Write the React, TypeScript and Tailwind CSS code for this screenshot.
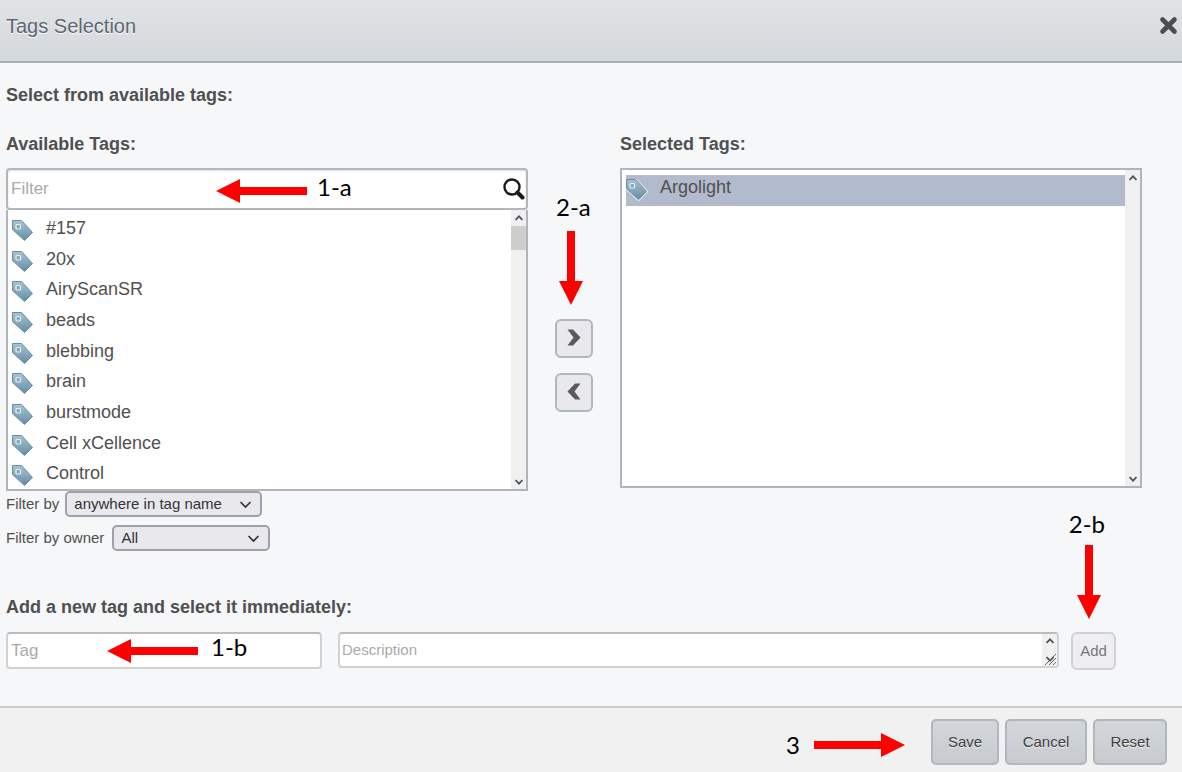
import { useState } from "react";
import clsx from "clsx";

const TAGS = ["#157", "20x", "AiryScanSR", "beads", "blebbing", "brain", "burstmode", "Cell xCellence", "Control"];

export default function App() {
  const [filter, setFilter] = useState("");
  const [tagName, setTagName] = useState("");
  const [description, setDescription] = useState("");

  const visible = TAGS.filter((t) => t.toLowerCase().includes(filter.toLowerCase()));

  return (
    <div className="flex min-h-screen flex-col bg-[#f5f7f9] font-['Liberation_Sans',Arial,sans-serif] text-[#505050]">
      <header className="flex h-[63px] items-start justify-between border-b-2 border-[#a8b0b7] bg-linear-to-b from-[#e0e4e6] to-[#d4d7db] pt-3 pl-[6px] pr-1">
        <h1 className="text-xl leading-7 text-[#5c6773] [text-shadow:0_1px_0_#fff]">Tags Selection</h1>
        <button type="button" aria-label="Close" className="pt-1">
          <CloseIcon />
        </button>
      </header>

      <main className="flex-1 pt-5 pr-10 pl-[6px]">
        <h2 className="text-lg leading-6 font-bold">Select from available tags:</h2>

        <div className="mt-[25px] flex items-start">
          <section className="min-w-0 flex-1">
            <label htmlFor="filter" className="block text-lg leading-6 font-bold">
              Available Tags:
            </label>
            <div className="relative mt-3">
              <input
                id="filter"
                value={filter}
                onChange={(e) => setFilter(e.target.value)}
                placeholder="Filter"
                className="block h-[42px] w-full rounded border-2 border-[#b2b7bc] bg-white pr-10 pl-[3px] text-[17px] shadow-[inset_0_1px_2px_#ddd] outline-none placeholder:text-[#aaa]"
              />
              <SearchIcon />
              <Note label="1-a" className="top-[5px] left-[210px] flex-row gap-[10px]">
                <Arrow className="mt-[6px] rotate-180" />
              </Note>
            </div>
            <div className="flex h-[281px] border-2 border-t-0 border-[#b0b5bd] bg-white">
              <ul className="grid h-[278px] flex-1 auto-rows-[minmax(0,1fr)] content-start pt-[2px] pl-1">
                {visible.map((tag) => (
                  <TagRow key={tag} name={tag} />
                ))}
              </ul>
              <Scrollbar thumb />
            </div>
            <div className="flex items-center gap-[6px] text-[15px]">
              <label htmlFor="mode">Filter by</label>
              <Dropdown id="mode" className="w-[197px]" options={["anywhere in tag name", "at start of tag name"]} />
            </div>
            <div className="mt-2 flex items-center gap-2 text-[15px]">
              <label htmlFor="owner">Filter by owner</label>
              <Dropdown id="owner" className="w-[158px]" options={["All", "Owned by me"]} />
            </div>
          </section>

          <div className="relative flex w-[92px] flex-col items-center gap-[15px] pt-[187px]">
            <Note label="2-a" className="top-[61px] left-7 flex-col-reverse justify-end gap-[10px]">
              <DownArrow className="ml-[3px]" />
            </Note>
            <MoveButton label="Add to selected" />
            <MoveButton label="Remove from selected" back />
          </div>

          <section className="min-w-0 flex-1">
            <h3 className="text-lg leading-6 font-bold">Selected Tags:</h3>
            <div className="mt-3 flex h-80 border-2 border-[#b0b5bd] bg-white">
              <ul className="flex-1 pt-[5px] pl-1">
                <TagRow name="Argolight" selected />
              </ul>
              <Scrollbar />
            </div>
          </section>
        </div>

        <h2 className="mt-11 text-lg leading-6 font-bold">Add a new tag and select it immediately:</h2>
        <form className="relative mt-[13px] flex items-start pr-[26px]" onSubmit={(e) => e.preventDefault()}>
          <input
            aria-label="Tag"
            value={tagName}
            onChange={(e) => setTagName(e.target.value)}
            placeholder="Tag"
            className="mr-4 h-[37px] w-[316px] rounded border-2 border-[#d0d2d4] border-t-[#bcbcbc] bg-white pl-[3px] text-[17px] outline-none placeholder:text-[#aaa]"
          />
          <div className="flex h-9 min-w-0 flex-1 overflow-hidden rounded border-2 border-[#d0d2d4] border-t-[#bcbcbc] bg-white">
            <textarea
              aria-label="Description"
              value={description}
              onChange={(e) => setDescription(e.target.value)}
              placeholder="Description"
              className="h-8 min-w-0 flex-1 resize-none overflow-hidden pt-[6px] pl-[2px] text-[15px] leading-5 outline-none placeholder:text-[#aaa]"
            />
            <div className="relative flex w-[15px] flex-col items-center justify-between bg-[#f0f0f0] py-[4px]">
              <ScrollChevron />
              <ScrollChevron down />
              <svg className="absolute right-0 bottom-0" width="13" height="13" viewBox="0 0 13 13" stroke="#666" strokeWidth="1">
                <path d="M1 12L12 1M5 12l7-7M9 12l3-3" />
              </svg>
            </div>
          </div>
          <button
            type="submit"
            className="ml-3 h-[38px] w-[45px] rounded-md border-2 border-[#cfd1d7] bg-[#efeff3] text-[15px] text-[#777]"
          >
            Add
          </button>
          <Note label="1-b" className="top-[1px] left-[101px] flex-row gap-[13px]">
            <Arrow className="mt-[6px] rotate-180" />
          </Note>
          <Note label="2-b" className="right-[37px] bottom-[51px] flex-col-reverse justify-end gap-[7px]">
            <DownArrow className="ml-2" />
          </Note>
        </form>
      </main>

      <footer className="flex h-[66px] items-start justify-end gap-[6px] border-t-2 border-[#c8ccce] bg-[#f1f1f1] pt-[11px] pr-[15px]">
        <div className="flex items-center gap-[14px] pt-3 pr-5">
          <NoteText>3</NoteText>
          <Arrow />
        </div>
        <FooterButton className="w-[68px]">Save</FooterButton>
        <FooterButton className="w-[82px]">Cancel</FooterButton>
        <FooterButton className="w-[74px]">Reset</FooterButton>
      </footer>
    </div>
  );
}

function TagRow({ name, selected }: { name: string; selected?: boolean }) {
  return (
    <li className={clsx("flex max-h-[31px] gap-3", selected ? "h-[31px] bg-[#b2bbcb]" : "")}>
      <TagIcon outlined={selected} />
      <span className={clsx("text-lg leading-6", selected ? "" : "pt-1")}>{name}</span>
    </li>
  );
}

function Dropdown({ id, options, className }: { id: string; options: string[]; className: string }) {
  return (
    <span className="relative inline-flex">
      <select
        id={id}
        className={clsx(
          "h-[26px] appearance-none rounded-[5px] border-2 border-[#9f9fad] bg-[#e9e9ed] pl-[7px] text-[15px] leading-5 text-[#333]",
          className
        )}
      >
        {options.map((o) => (
          <option key={o}>{o}</option>
        ))}
      </select>
      <svg
        className="pointer-events-none absolute top-[10px] right-[11px]"
        width="11"
        height="8"
        viewBox="0 0 11 8"
        fill="none"
        stroke="#333"
        strokeWidth="1.7"
        strokeLinecap="round"
      >
        <path d="M1 1.5l4.5 4.5L10 1.5" />
      </svg>
    </span>
  );
}

function MoveButton({ label, back }: { label: string; back?: boolean }) {
  return (
    <button
      type="button"
      aria-label={label}
      className="flex h-[39px] w-[38px] items-center justify-center rounded-md border-2 border-[#afb7bf] bg-[#e9e9ed] pb-[2px]"
    >
      <svg className={back ? "rotate-180" : ""} width="14" height="17" viewBox="0 0 14 17">
        <path d="M0.5 0.5H6L13.5 8.5L6 16.5H0.5L6.5 8.5Z" fill="#5a5a5a" />
      </svg>
    </button>
  );
}

function FooterButton({ children, className }: { children: string; className: string }) {
  return (
    <button
      type="button"
      className={clsx(
        "h-[46px] rounded-[5px] border-2 border-[#b0b8bf] bg-linear-to-b from-[#d3d6d9] to-[#c7cacf] text-[15px] text-[#3f3f3f] [text-shadow:0_1px_0_#eee]",
        className
      )}
    >
      {children}
    </button>
  );
}

function Scrollbar({ thumb }: { thumb?: boolean }) {
  return (
    <div className="flex w-[15px] flex-col items-center justify-between bg-[#f0f0f0] pt-[5px] pb-1">
      <div className="flex w-full flex-col items-center gap-[5px]">
        <ScrollChevron />
        {thumb && <div className="h-6 w-full bg-[#cdcdcd]" />}
      </div>
      <ScrollChevron down />
    </div>
  );
}

function ScrollChevron({ down }: { down?: boolean }) {
  return (
    <svg className={down ? "rotate-180" : ""} width="8" height="6" viewBox="0 0 8 6" fill="none" stroke="#505050" strokeWidth="1.7">
      <path d="M0.5 5L4 1.3L7.5 5" />
    </svg>
  );
}

// Callouts pointing at each step of the dialog
function Note({ label, className, children }: { label: string; className: string; children: React.ReactNode }) {
  return (
    <div className={clsx("pointer-events-none absolute flex items-start", className)}>
      {children}
      <NoteText>{label}</NoteText>
    </div>
  );
}

function NoteText({ children }: { children: string }) {
  return <span className="font-[Lato,'Open_Sans',sans-serif] text-2xl leading-7 text-black">{children}</span>;
}

function Arrow({ className }: { className?: string }) {
  return (
    <svg className={className} width="91" height="24" viewBox="0 0 91 24" fill="#f00">
      <path d="M0 8H67V0L91 12L67 24V16H0Z" />
    </svg>
  );
}

function DownArrow({ className }: { className?: string }) {
  return (
    <svg className={className} width="24" height="74" viewBox="0 0 24 74" fill="#f00">
      <path d="M8 0H16V50H24L12 74L0 50H8Z" />
    </svg>
  );
}

function CloseIcon() {
  return (
    <svg width="19" height="19" viewBox="0 0 19 19" stroke="#4d4d4d" strokeWidth="4.6" strokeLinecap="round">
      <path d="M3.5 3.5L15.5 15.5M15.5 3.5L3.5 15.5" />
    </svg>
  );
}

function SearchIcon() {
  return (
    <svg className="absolute top-[10px] right-[3px]" width="22" height="22" viewBox="0 0 22 22" fill="none" stroke="#1a1a1a">
      <circle cx="9" cy="9" r="7.5" strokeWidth="2.4" />
      <path d="M14.5 14.5L19.5 19.5" strokeWidth="4" strokeLinecap="round" />
    </svg>
  );
}

function TagIcon({ outlined }: { outlined?: boolean }) {
  return (
    <svg className={clsx("h-[22px] w-[22px] shrink-0", outlined ? "mt-1" : "mt-2")} viewBox="0 0 22 22">
      <defs>
        <linearGradient id="tagFill" x1="0" y1="0" x2="0" y2="1">
          <stop offset="0" stopColor="#a9c4d3" />
          <stop offset="1" stopColor="#648ca5" />
        </linearGradient>
      </defs>
      {outlined && <path d="M0.5 0.5H9.5L20.5 12.5L12.5 20.5L0.5 9.5Z" fill="none" stroke="#dbe6ee" strokeWidth="3" strokeLinejoin="round" />}
      <path d="M0.5 0.5H9.5L20.5 12.5L12.5 20.5L0.5 9.5Z" fill="url(#tagFill)" stroke="#668da4" strokeWidth="1" strokeLinejoin="round" />
      <rect x="4" y="4.5" width="4.5" height="4.5" rx="1" fill="#86a8bc" stroke="#e5f0f6" strokeWidth="1.2" />
    </svg>
  );
}
